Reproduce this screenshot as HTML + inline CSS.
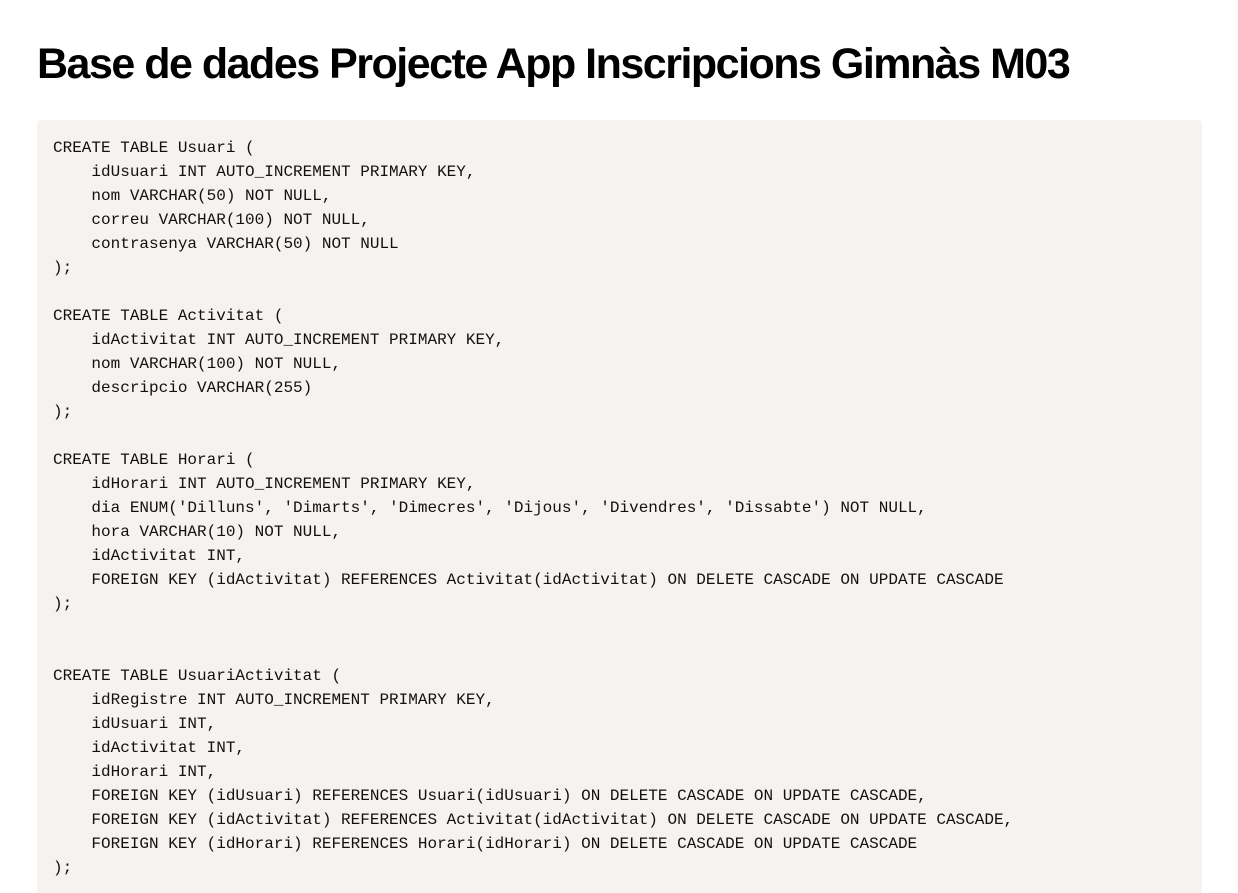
<!DOCTYPE html>
<html><head><meta charset="utf-8"><style>
html,body{margin:0;padding:0;background:#fff;width:1238px;height:893px;overflow:hidden}
h1{position:absolute;left:37px;top:38px;margin:0;font-family:"Liberation Sans",sans-serif;font-weight:bold;font-size:43px;line-height:52px;letter-spacing:-1.5px;color:#000;white-space:nowrap}
pre{position:absolute;left:37px;top:120px;width:1165px;height:773px;box-sizing:border-box;margin:0;padding:16px;background:#f5f2ef;border-radius:4px 4px 0 0;font-family:"Liberation Mono",monospace;font-size:16px;line-height:24px;color:#111;overflow:hidden}
</style></head><body>
<h1>Base de dades Projecte App Inscripcions Gimnàs M03</h1>
<pre>CREATE TABLE Usuari (
    idUsuari INT AUTO_INCREMENT PRIMARY KEY,
    nom VARCHAR(50) NOT NULL,
    correu VARCHAR(100) NOT NULL,
    contrasenya VARCHAR(50) NOT NULL
);

CREATE TABLE Activitat (
    idActivitat INT AUTO_INCREMENT PRIMARY KEY,
    nom VARCHAR(100) NOT NULL,
    descripcio VARCHAR(255)
);

CREATE TABLE Horari (
    idHorari INT AUTO_INCREMENT PRIMARY KEY,
    dia ENUM('Dilluns', 'Dimarts', 'Dimecres', 'Dijous', 'Divendres', 'Dissabte') NOT NULL,
    hora VARCHAR(10) NOT NULL,
    idActivitat INT,
    FOREIGN KEY (idActivitat) REFERENCES Activitat(idActivitat) ON DELETE CASCADE ON UPDATE CASCADE
);


CREATE TABLE UsuariActivitat (
    idRegistre INT AUTO_INCREMENT PRIMARY KEY,
    idUsuari INT,
    idActivitat INT,
    idHorari INT,
    FOREIGN KEY (idUsuari) REFERENCES Usuari(idUsuari) ON DELETE CASCADE ON UPDATE CASCADE,
    FOREIGN KEY (idActivitat) REFERENCES Activitat(idActivitat) ON DELETE CASCADE ON UPDATE CASCADE,
    FOREIGN KEY (idHorari) REFERENCES Horari(idHorari) ON DELETE CASCADE ON UPDATE CASCADE
);</pre>
</body></html>
